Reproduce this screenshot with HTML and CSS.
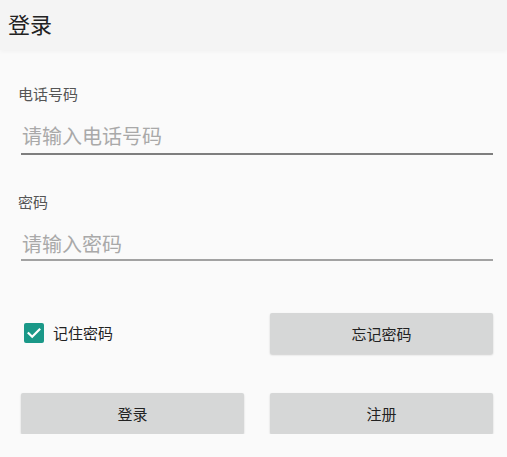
FILE: index.html
```html
<!DOCTYPE html>
<html lang="zh-CN">
<head>
<meta charset="utf-8">
<title>登录</title>
<link rel="stylesheet" href="styles.css">
</head>
<body>
<header class="appbar">登录</header>
<main class="form">
  <section class="field field-phone">
    <label class="field-label">电话号码</label>
    <div class="field-input underline-dark">请输入电话号码</div>
  </section>
  <section class="field field-pass">
    <label class="field-label">密码</label>
    <div class="field-input underline-light">请输入密码</div>
  </section>
  <div class="actions">
    <div class="remember">
      <span class="checkbox">
        <svg width="20" height="20" viewBox="0 0 20 20"><path d="M4.6 10.2 L8.2 13.8 L15.4 6.6" fill="none" stroke="#fff" stroke-width="2.2" stroke-linecap="square"/></svg>
      </span>
      <span class="remember-text">记住密码</span>
    </div>
    <button class="btn">忘记密码</button>
    <button class="btn btn-row2">登录</button>
    <button class="btn btn-row2">注册</button>
  </div>
</main>
</body>
</html>
```

FILE: styles.css
```css
* { box-sizing: border-box; }
html, body {
  margin: 0;
  padding: 0;
  background: #fafafa;
  font-family: "Noto Sans CJK SC", "Noto Sans", "Liberation Sans", sans-serif;
}
.appbar {
  height: 50px;
  line-height: 46px;
  padding-left: 8px;
  font-size: 22px;
  color: #222;
  background: #f4f4f4;
  box-shadow: 0 2px 4px rgba(0,0,0,0.03);
}
.form {
  padding: 0 14px 0 21px;
}
.field-label {
  display: block;
  height: 20px;
  line-height: 20px;
  font-size: 15px;
  color: #555;
  margin-left: -3px;
}
.field-phone { margin-top: 34px; }
.field-pass { margin-top: 37px; }
.field-input {
  font-size: 20px;
  line-height: 28px;
  color: #a9a9a9;
  padding-left: 1px;
}
.field-phone .field-input { padding-top: 18px; padding-bottom: 3px; }
.field-pass .field-input { padding-top: 18px; padding-bottom: 1px; }
.underline-dark { border-bottom: 2px solid #7e7e7e; }
.underline-light { border-bottom: 2px solid #a2a2a2; }
.actions {
  display: grid;
  grid-template-columns: 223px 223px;
  column-gap: 26px;
  row-gap: 39px;
  margin-top: 52px;
}
.remember {
  display: flex;
  align-items: center;
  padding-left: 3px;
  padding-bottom: 2px;
}
.checkbox {
  width: 20px;
  height: 20px;
  border-radius: 2px;
  background: #1a9888;
  display: block;
}
.checkbox svg { display: block; }
.remember-text {
  margin-left: 9px;
  font-size: 15px;
  color: #222;
}
.btn {
  height: 41px;
  border: none;
  border-radius: 2px;
  background: #d6d7d7;
  box-shadow: 0 1px 2px rgba(0,0,0,0.18);
  font-family: inherit;
  font-size: 15px;
  color: #222;
  padding: 0;
}
```
